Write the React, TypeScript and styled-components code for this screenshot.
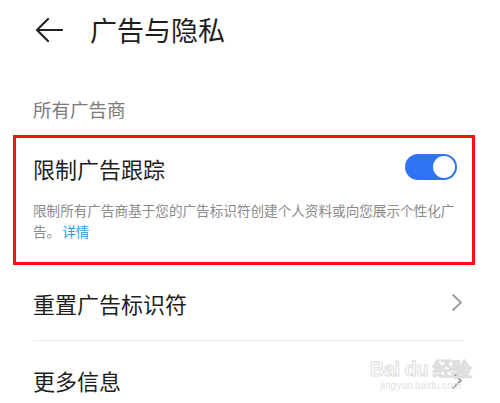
import styled, { createGlobalStyle } from "styled-components";

const GlobalStyle = createGlobalStyle`
  html, body {
    margin: 0;
    padding: 0;
    background: #ffffff;
  }
  body {
    font-family: "Noto Sans CJK SC", "Noto Sans", sans-serif;
  }
`;

const Page = styled.div`
  position: relative;
  width: 500px;
  height: 403px;
  overflow: hidden;
  background: #ffffff;
  display: flex;
  flex-direction: column;

  & > * {
    flex-shrink: 0;
  }
`;

const Header = styled.div`
  height: 60px;
  display: flex;
  align-items: center;
  padding-left: 35px;
  gap: 27px;
`;

const Title = styled.div`
  font-size: 27px;
  line-height: 32px;
  color: #1e1e1e;
`;

const SectionLabel = styled.div`
  padding: 37px 0 0 33px;
  font-size: 18.5px;
  line-height: 24px;
  color: #7a7a7a;
`;

const Card = styled.div`
  margin: 14px 25px 0 13px;
  height: 130px;
  box-sizing: border-box;
  border: 3px solid #ff1010;
  padding: 15px 13px 0 17px;
  display: flex;
  flex-direction: column;
`;

const SwitchRow = styled.div`
  height: 30px;
  display: flex;
  align-items: center;
  justify-content: space-between;
  padding-right: 2px;
`;

const RowLabel = styled.div`
  font-size: 22px;
  line-height: 30px;
  color: #1e1e1e;
`;

const Toggle = styled.div<{ $on: boolean }>`
  width: 52px;
  height: 26px;
  border-radius: 13px;
  background: ${(p) => (p.$on ? "#2f74f2" : "#cccccc")};
  display: flex;
  align-items: center;
  justify-content: ${(p) => (p.$on ? "flex-end" : "flex-start")};
  padding: 0 2px;
  box-sizing: border-box;
  margin-top: -3px;
`;

const Knob = styled.div`
  width: 22px;
  height: 22px;
  border-radius: 50%;
  background: #ffffff;
`;

const Description = styled.div`
  margin-top: 17px;
  display: flex;
  flex-direction: column;
  font-size: 13.6px;
  line-height: 20.5px;
  color: #8a8a8a;
`;

const DescLine = styled.div`
  white-space: nowrap;
`;

const Link = styled.span`
  color: #1b9fe6;
  margin-left: 2px;
`;

const NavRow = styled.div<{ $h: number }>`
  height: ${(p) => p.$h}px;
  display: flex;
  align-items: center;
  justify-content: space-between;
  padding: 0 37px 0 33px;
`;

const Divider = styled.div`
  height: 1px;
  margin: 0 36px 0 33px;
  background: #ececec;
`;

const Watermark = styled.div`
  position: absolute;
  right: 28px;
  bottom: 11px;
  display: flex;
  flex-direction: column;
  align-items: center;
  font-family: "Liberation Sans", sans-serif;
  pointer-events: none;
`;

const MarkTop = styled.div`
  font-size: 20px;
  line-height: 22px;
  font-weight: bold;
  color: transparent;
  -webkit-text-stroke: 1px #dedede;
  letter-spacing: -0.5px;
`;

const MarkBottom = styled.div`
  font-size: 10px;
  line-height: 12px;
  color: #e2e2e2;
`;

const BackArrow = () => (
  <svg width="28" height="26" viewBox="0 0 28 26" fill="none">
    <path
      d="M13 2 L2 13 L13 24 M2 13 H27"
      stroke="#222"
      strokeWidth="2.2"
      strokeLinecap="round"
      strokeLinejoin="round"
    />
  </svg>
);

const Chevron = () => (
  <svg width="12" height="19" viewBox="0 0 12 19" fill="none">
    <path
      d="M2 2 L10 9.5 L2 17"
      stroke="#9a9a9a"
      strokeWidth="1.8"
      strokeLinecap="round"
      strokeLinejoin="round"
    />
  </svg>
);

export default function App() {
  return (
    <>
      <GlobalStyle />
      <Page>
        <Header>
          <BackArrow />
          <Title>广告与隐私</Title>
        </Header>
        <SectionLabel>所有广告商</SectionLabel>
        <Card>
          <SwitchRow>
            <RowLabel>限制广告跟踪</RowLabel>
            <Toggle $on={true}>
              <Knob />
            </Toggle>
          </SwitchRow>
          <Description>
            <DescLine>限制所有广告商基于您的广告标识符创建个人资料或向您展示个性化广</DescLine>
            <DescLine>
              告。<Link>详情</Link>
            </DescLine>
          </Description>
        </Card>
        <NavRow $h={75}>
          <RowLabel>重置广告标识符</RowLabel>
          <Chevron />
        </NavRow>
        <Divider />
        <NavRow $h={78}>
          <RowLabel>更多信息</RowLabel>
          <Chevron />
        </NavRow>
        <Watermark>
          <MarkTop>Bai du 经验</MarkTop>
          <MarkBottom>jingyan.baidu.com</MarkBottom>
        </Watermark>
      </Page>
    </>
  );
}
